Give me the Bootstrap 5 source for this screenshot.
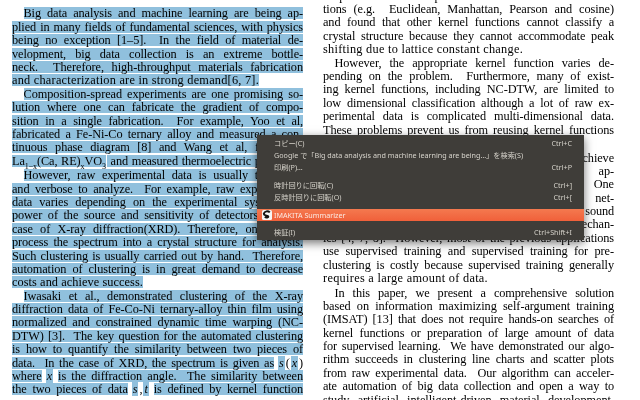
<!DOCTYPE html>
<html lang="en"><head><meta charset="utf-8">
<link href="https://cdn.jsdelivr.net/npm/bootstrap@5.3.0/dist/css/bootstrap.min.css" rel="stylesheet">
<style>
html,body{width:640px;height:400px;overflow:hidden;background:#fff}
.paper{height:400px;overflow:hidden;font:12.3px/12px "Liberation Serif",serif;color:#000;filter:blur(.3px)}
.pcol{width:291px;flex:none}
.pcol-l{margin-left:12px;padding-top:7.4px}
.pcol-r{margin-left:20px;margin-top:-10.3px}
.ln{height:12px;margin-bottom:1.4px;white-space:nowrap;text-align:justify;text-align-last:justify}
.ln.end{text-align-last:left;width:fit-content}
.ln.ind{margin-left:11.5px}
.ln.pgap{margin-top:1px}
.ln.pgap2{margin-top:2.5px}
.sel{background:#90c0dd}
.wgap{background:#fff}
.wgap i{background:#90c0dd;padding:0 1px}
.wgap b{font-weight:400;padding:0 1px}
.wgap b:first-child{padding:0 2px}
.wgap b:last-child{padding:0 0 0 1px}
.wgap b.tail{padding:0 2.5px}
.paper sub{font-size:8px;line-height:0;vertical-align:-2px}
.ctx{position:absolute;left:257px;top:135px;width:327px;height:105px;background:#3f3d39;color:#d6d3cb;font:7.2px/12px "Noto Sans","Noto Sans CJK JP",sans-serif;box-shadow:0 3px 9px rgba(0,0,0,.55);padding-top:2px;filter:blur(.2px)}
.mi{height:12px;padding:0 12px 0 17px;white-space:nowrap}
.mi.g1{margin-top:6px}
.mi.g2{margin-top:5.5px}
.mi.hot{background:linear-gradient(#f4794f,#f0603a);color:#fbe9e2;position:relative}
.mico{position:absolute;left:5px;top:1px;width:10px;height:10px}
</style></head><body>
<div class="paper d-flex">
<div class="pcol pcol-l">
<div class="ln ind sel">Big data analysis and machine learning are being ap-</div>
<div class="ln sel">plied in many fields of fundamental sciences, with physics</div>
<div class="ln sel">being no exception [1–5]. &nbsp;In the field of material de-</div>
<div class="ln sel">velopment, big data collection is an extreme bottle-</div>
<div class="ln sel">neck. &nbsp;Therefore, high-throughput materials fabrication</div>
<div class="ln sel end" data-w="247">and characterization are in strong demand[6, 7].</div>
<div class="ln ind sel pgap">Composition-spread experiments are one promising so-</div>
<div class="ln sel">lution where one can fabricate the gradient of compo-</div>
<div class="ln sel">sition in a single fabrication. &nbsp;For example, Yoo et al,</div>
<div class="ln sel">fabricated a Fe-Ni-Co ternary alloy and measured a con-</div>
<div class="ln sel">tinuous phase diagram [8] and Wang et al, fabricated</div>
<div class="ln sel">La<sub>1−x</sub>(Ca, RE)<sub>x</sub>VO<sub>3</sub><span class="wgap"><b></b></span> and measured thermoelectric properties</div>
<div class="ln ind sel pgap2">However, raw experimental data is usually too noisy</div>
<div class="ln sel">and verbose to analyze. &nbsp;For example, raw experimental</div>
<div class="ln sel">data varies depending on the experimental system, the</div>
<div class="ln sel">power of the source and sensitivity of detectors. &nbsp;In the</div>
<div class="ln sel">case of X-ray diffraction(XRD). Therefore, one has to</div>
<div class="ln sel">process the spectrum into a crystal structure for analysis.</div>
<div class="ln sel">Such clustering is usually carried out by hand. &nbsp;Therefore,</div>
<div class="ln sel">automation of clustering is in great demand to decrease</div>
<div class="ln sel end" data-w="131">costs and achieve success.</div>
<div class="ln ind sel pgap">Iwasaki et al., demonstrated clustering of the X-ray</div>
<div class="ln sel">diffraction data of Fe-Co-Ni ternary-alloy thin film using</div>
<div class="ln sel">normalized and constrained dynamic time warping (NC-</div>
<div class="ln sel">DTW) [3]. &nbsp;The key question for the automated clustering</div>
<div class="ln sel">is how to quantify the similarity between two pieces of</div>
<div class="ln sel">data. &nbsp;In the case of XRD, the spectrum is given as<span class="wgap"><b></b><i>s</i><b>(</b><i>x</i><b>)</b></span></div>
<div class="ln sel">where<span class="wgap"><b></b><i>x</i><b class="tail"></b></span>is the diffraction angle. &nbsp;The similarity between</div>
<div class="ln sel">the two pieces of data<span class="wgap"><b></b><i>s</i><b>,</b><i>t</i><b class="tail"></b></span>is defined by kernel function</div>
</div>
<div class="pcol pcol-r">
<div class="ln">shapes and compared various kernel func-</div>
<div class="ln">tions (e.g. &nbsp;Euclidean, Manhattan, Pearson and cosine)</div>
<div class="ln">and found that other kernel functions cannot classify a</div>
<div class="ln">crystal structure because they cannot accommodate peak</div>
<div class="ln end" data-w="200">shifting due to lattice constant change.</div>
<div class="ln ind">However, the appropriate kernel function varies de-</div>
<div class="ln">pending on the problem. &nbsp;Furthermore, many of exist-</div>
<div class="ln">ing kernel functions, including NC-DTW, are limited to</div>
<div class="ln">low dimensional classification although a lot of raw ex-</div>
<div class="ln">perimental data is complicated multi-dimensional data.</div>
<div class="ln">These problems prevent us from reusing kernel functions</div>
<div class="ln end">for new applications.</div>
<div class="ln ind pgap2">Many researchers have tried to achieve</div>
<div class="ln">automated clustering with other methods, ap-</div>
<div class="ln">plying machine learning techniques. &nbsp;One</div>
<div class="ln">of them uses convolutional neural net-</div>
<div class="ln">works trained on a large amount of sound</div>
<div class="ln">and spectra to learn the hidden mechan-</div>
<div class="ln">ics [4, 7, 8]. &nbsp;However, most of the previous applications</div>
<div class="ln">use supervised training and supervised training for pre-</div>
<div class="ln">clustering is costly because supervised training generally</div>
<div class="ln end" data-w="165">requires a large amount of data.</div>
<div class="ln ind pgap2">In this paper, we present a comprehensive solution</div>
<div class="ln">based on information maximizing self-argument training</div>
<div class="ln">(IMSAT) [13] that does not require hands-on searches of</div>
<div class="ln">kernel functions or preparation of large amount of data</div>
<div class="ln">for supervised learning. &nbsp;We have demonstrated our algo-</div>
<div class="ln">rithm succeeds in clustering line charts and scatter plots</div>
<div class="ln">from raw experimental data. &nbsp;Our algorithm can acceler-</div>
<div class="ln">ate automation of big data collection and open a way to</div>
<div class="ln">study artificial intelligent-driven material development.</div>
</div>
</div>
<div class="ctx">
<div class="mi d-flex justify-content-between"><span>コピー(C)</span><span>Ctrl+C</span></div>
<div class="mi d-flex justify-content-between"><span>Google で「Big data analysis and machine learning are being…」を検索(S)</span></div>
<div class="mi d-flex justify-content-between"><span>印刷(P)…</span><span>Ctrl+P</span></div>
<div class="mi g1 d-flex justify-content-between"><span>時計回りに回転(C)</span><span>Ctrl+]</span></div>
<div class="mi d-flex justify-content-between"><span>反時計回りに回転(O)</span><span>Ctrl+[</span></div>
<div class="mi g2 hot d-flex justify-content-between"><svg class="mico" viewBox="0 0 10 10"><rect width="10" height="10" rx="1.5" fill="#f6f6f4"/><path d="M7.8 2.4A3.6 3.6 0 0 0 1.8 3.6c0 1.7 1.7 1.8 3.2 2.1 1.2.2 1.6 1 .9 1.5-1 .6-2.4.2-3-.6" fill="none" stroke="#151413" stroke-width="1.9"/></svg><span>IMAKITA Summarizer</span></div>
<div class="mi g2 d-flex justify-content-between"><span>検証(I)</span><span>Ctrl+Shift+I</span></div>
</div>
<script src="https://cdn.jsdelivr.net/npm/bootstrap@5.3.0/dist/js/bootstrap.bundle.min.js"></script>
<script>
document.querySelectorAll('.ln').forEach(function(l){
  var r=document.createRange();r.selectNodeContents(l);
  var w=r.getBoundingClientRect().width,n=l.textContent.length,t;
  if(l.classList.contains('end')){
    if(!l.dataset.w)return;
    t=+l.dataset.w;
    l.style.letterSpacing=((t-w)/n)+'px';
  }else{
    t=l.parentNode.clientWidth-(l.classList.contains('ind')?11.5:0);
    var sp=(l.textContent.match(/ /g)||[]).length;
    l.style.letterSpacing=((t-w-sp*.7)/n)+'px';
  }
});
</script>
</body></html>
